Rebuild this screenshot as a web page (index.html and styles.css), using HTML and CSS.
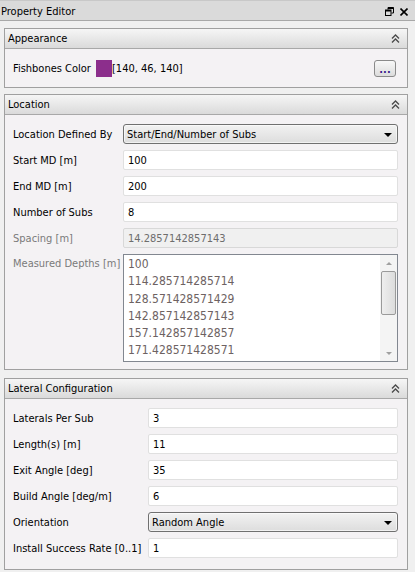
FILE: index.html
```html
<!DOCTYPE html>
<html>
<head>
<meta charset="utf-8">
<link rel="stylesheet" href="styles.css">
</head>
<body>
<div class="titlebar">
  <span class="title">Property Editor</span>
  <span class="title-icons">
    <svg width="9" height="9" viewBox="0 0 9 9"><path d="M3 0.5h5.5v5.5M3 0.5v2M8.5 6h-2" fill="none" stroke="#000" stroke-width="1"/><rect x="0.5" y="3" width="5.5" height="5.5" fill="none" stroke="#000" stroke-width="1"/><rect x="0.5" y="3" width="5.5" height="1.5" fill="#000"/><rect x="3" y="0.5" width="5.5" height="1.5" fill="#000"/></svg>
    <svg width="8" height="8" viewBox="0 0 8 8"><path d="M0.5 0.5L7.5 7.5M7.5 0.5L0.5 7.5" stroke="#000" stroke-width="1.6"/></svg>
  </span>
</div>
<div class="panels">
  <section class="group g-app">
    <header class="group-head">
      <span>Appearance</span>
      <svg class="chev" width="9" height="9" viewBox="0 0 9 9"><path d="M1 4.5L4.5 1L8 4.5M1 8.5L4.5 5L8 8.5" fill="none" stroke="#4a4a4a" stroke-width="1.3"/></svg>
    </header>
    <div class="group-body appearance">
      <span class="label">Fishbones Color</span>
      <span class="swatch"></span>
      <span class="color-text">[140, 46, 140]</span>
      <span class="spacer"></span>
      <button class="dots-btn"><span class="dots">...</span></button>
    </div>
  </section>

  <section class="group g-loc">
    <header class="group-head">
      <span>Location</span>
      <svg class="chev" width="9" height="9" viewBox="0 0 9 9"><path d="M1 4.5L4.5 1L8 4.5M1 8.5L4.5 5L8 8.5" fill="none" stroke="#4a4a4a" stroke-width="1.3"/></svg>
    </header>
    <div class="group-body form loc">
      <span class="label">Location Defined By</span>
      <div class="combo"><span>Start/End/Number of Subs</span><span class="arrow"></span></div>
      <span class="label">Start MD [m]</span>
      <div class="field">100</div>
      <span class="label">End MD [m]</span>
      <div class="field">200</div>
      <span class="label">Number of Subs</span>
      <div class="field">8</div>
      <span class="label disabled">Spacing [m]</span>
      <div class="field field-disabled">14.2857142857143</div>
      <span class="label disabled top">Measured Depths [m]</span>
      <div class="list">
        <div class="list-items">
          <div>100</div>
          <div>114.285714285714</div>
          <div>128.571428571429</div>
          <div>142.857142857143</div>
          <div>157.142857142857</div>
          <div>171.428571428571</div>
        </div>
        <div class="vscroll">
          <span class="sarrow up"></span>
          <span class="thumb"></span>
          <span class="sarrow down"></span>
        </div>
      </div>
    </div>
  </section>

  <section class="group g-lat">
    <header class="group-head">
      <span>Lateral Configuration</span>
      <svg class="chev" width="9" height="9" viewBox="0 0 9 9"><path d="M1 4.5L4.5 1L8 4.5M1 8.5L4.5 5L8 8.5" fill="none" stroke="#4a4a4a" stroke-width="1.3"/></svg>
    </header>
    <div class="group-body form lat">
      <span class="label">Laterals Per Sub</span>
      <div class="field">3</div>
      <span class="label">Length(s) [m]</span>
      <div class="field">11</div>
      <span class="label">Exit Angle [deg]</span>
      <div class="field">35</div>
      <span class="label">Build Angle [deg/m]</span>
      <div class="field">6</div>
      <span class="label">Orientation</span>
      <div class="combo"><span>Random Angle</span><span class="arrow"></span></div>
      <span class="label">Install Success Rate [0..1]</span>
      <div class="field">1</div>
    </div>
  </section>
</div>
</body>
</html>
```
FILE: styles.css
```css
html, body {
  margin: 0;
  padding: 0;
}
body {
  width: 415px;
  height: 572px;
  overflow: hidden;
  background: #f0f0f0;
  font-family: "DejaVu Sans Condensed", "DejaVu Sans", sans-serif;
  font-stretch: condensed;
  font-size: 11px;
  color: #000;
}
.titlebar {
  height: 21px;
  box-sizing: border-box;
  border-top: 1px solid #c8c8c8;
  border-bottom: 1px solid #a8a8a8;
  background: #dadada;
  display: flex;
  align-items: center;
  padding: 0 7px 0 1px;
}
.title {
  flex: 1;
  margin-top: 1px;
}
.title-icons {
  display: flex;
  align-items: center;
  gap: 6px;
  margin-top: 2px;
}
.panels {
  padding: 7px 7px 0 4px;
  display: flex;
  flex-direction: column;
}
.group {
  border: 1px solid #a0a0a0;
  background: #f4f2f4;
}
.g-loc {
  margin-top: 6px;
}
.g-lat {
  margin-top: 8px;
}
.group-head {
  height: 20px;
  box-sizing: border-box;
  border-bottom: 1px solid #a8a8a8;
  background: linear-gradient(#f6f6f6, #dadada);
  display: flex;
  align-items: center;
  justify-content: space-between;
  padding: 0 7px 0 3px;
}
.chev {
  display: block;
}
.group-body.appearance {
  height: 38px;
  box-sizing: border-box;
  display: flex;
  align-items: center;
  padding: 0 11px 0 8px;
}
.appearance .label {
  width: 83px;
}
.swatch {
  width: 16px;
  height: 17px;
  background: #8c2e8c;
}
.spacer {
  flex: 1;
}
.dots-btn {
  width: 22px;
  height: 17px;
  border: 1px solid #8a8a8a;
  border-radius: 3px;
  background: linear-gradient(#f8f8f8, #dcdcdc);
  padding: 0;
  margin: 0;
  display: flex;
  align-items: flex-end;
  justify-content: center;
  font-family: inherit;
  font-size: 11px;
  color: #3a1a8a;
}
.dots {
  line-height: 12px;
  font-weight: bold;
}
.form {
  display: grid;
  row-gap: 6px;
  align-items: center;
  padding: 9px 9px 7px 8px;
}
.form.loc {
  grid-template-columns: 110px 1fr;
}
.form.lat {
  grid-template-columns: 135px 1fr;
  padding-bottom: 11px;
}
.label {
  white-space: nowrap;
}
.label.disabled {
  color: #7a7a7a;
}
.label.top {
  align-self: start;
  margin-top: 3px;
}
.field {
  height: 20px;
  box-sizing: border-box;
  background: #fff;
  border: 1px solid #e0e0e0;
  border-radius: 2px;
  padding: 1px 4px 0;
  display: flex;
  align-items: center;
}
.field-disabled {
  background: #f0f0f0;
  border-color: #d8d8d8;
  color: #6d6d6d;
}
.combo {
  height: 20px;
  box-sizing: border-box;
  border: 1px solid #707070;
  border-radius: 3px;
  background: linear-gradient(#f2f2f2, #dddddd);
  display: flex;
  align-items: center;
  justify-content: space-between;
  padding: 0 5px 0 3px;
  box-shadow: inset 0 0 0 1px rgba(255,255,255,0.6);
}
.arrow {
  width: 0;
  height: 0;
  border-left: 4px solid transparent;
  border-right: 4px solid transparent;
  border-top: 4px solid #000;
  margin-top: 1px;
}
.list {
  height: 108px;
  box-sizing: border-box;
  border: 1px solid #828790;
  background: #fff;
  display: flex;
}
.list-items {
  flex: 1;
  padding: 1px 0 0 4px;
  color: #6d6262;
  font-size: 12px;
  line-height: 17.3px;
  overflow: hidden;
}
.vscroll {
  width: 17px;
  display: flex;
  flex-direction: column;
  align-items: center;
  background: #f4f4f4;
}
.sarrow {
  width: 0;
  height: 0;
  border-left: 3px solid transparent;
  border-right: 3px solid transparent;
}
.sarrow.up {
  border-bottom: 3px solid #a0a0a0;
  margin-top: 7px;
}
.sarrow.down {
  border-top: 3px solid #a0a0a0;
  margin-top: auto;
  margin-bottom: 6px;
}
.thumb {
  width: 15px;
  height: 44px;
  box-sizing: border-box;
  border: 1px solid #9a9a9a;
  border-radius: 2px;
  background: linear-gradient(90deg, #eeeeee, #dcdcdc);
  margin-top: 6px;
}
```
